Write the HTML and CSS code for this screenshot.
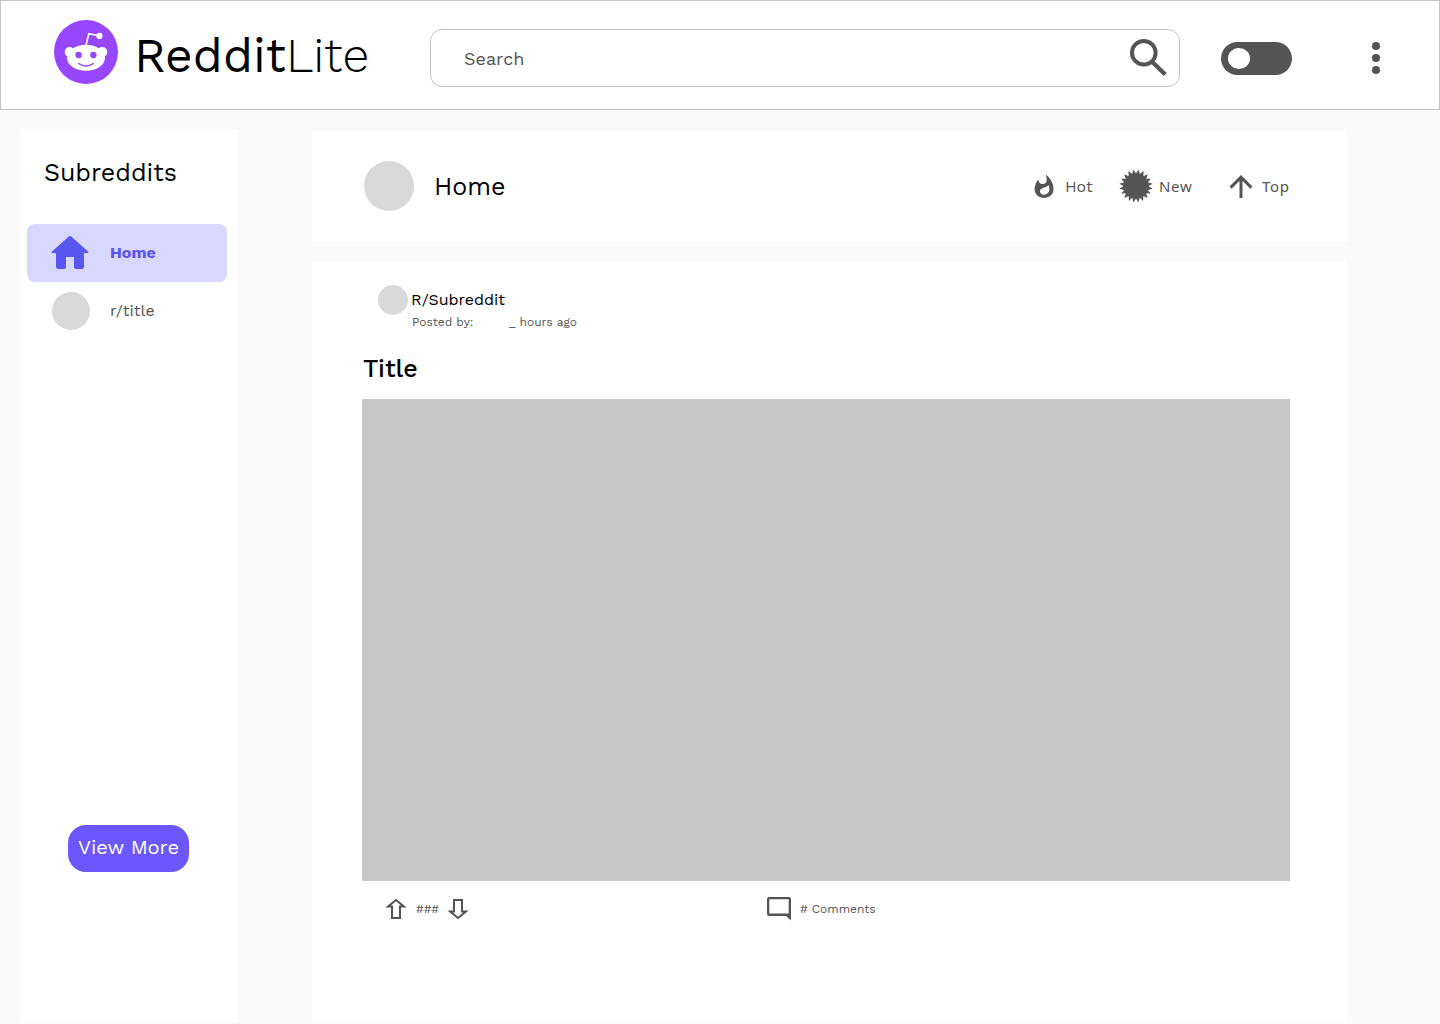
FILE: index.html
```html
<!DOCTYPE html>
<html lang="en">
<head>
<meta charset="utf-8">
<title>RedditLite</title>
<link rel="stylesheet" href="styles.css">
</head>
<body>
<header class="topbar">
  <svg class="logo" viewBox="0 0 64 64" aria-hidden="true">
    <circle cx="32" cy="32" r="32" fill="#9747ff"/>
    <circle cx="15.7" cy="32" r="5" fill="#fff"/>
    <circle cx="48.3" cy="32" r="5" fill="#fff"/>
    <ellipse cx="32" cy="37.8" rx="19" ry="13" fill="#fff"/>
    <path d="M31.8 26 34.8 13.7 45 15.8" fill="none" stroke="#fff" stroke-width="1.6"/>
    <circle cx="45.4" cy="15.9" r="3.1" fill="#fff"/>
    <circle cx="24.6" cy="35" r="3.2" fill="#9747ff"/>
    <circle cx="39.4" cy="35" r="3.2" fill="#9747ff"/>
    <path d="M24.8 43.7Q32 48.4 39.2 43.7" fill="none" stroke="#9747ff" stroke-width="1.6" stroke-linecap="round"/>
  </svg>
  <h1 class="brand"><span>Reddit</span><span class="brand-lite">Lite</span></h1>
  <div class="search">
    <span class="search-label">Search</span>
    <svg class="search-icon" viewBox="0 0 38 38" aria-hidden="true">
      <circle cx="13.8" cy="14.8" r="11.8" fill="none" stroke="#545454" stroke-width="4"/>
      <path d="M22.4 24 35.2 36.4" stroke="#545454" stroke-width="4.2"/>
    </svg>
  </div>
  <div class="toggle"><div class="knob"></div></div>
  <div class="dots"><i></i><i></i><i></i></div>
</header>
<div class="page">
  <aside class="sidebar">
    <h2 class="side-title">Subreddits</h2>
    <div class="side-item active">
      <svg class="home-icon" viewBox="0 0 38 36" aria-hidden="true">
        <path d="M17.8 1.4Q19 .4 20.2 1.4L37 16.4Q38 18 36.4 18H33V32Q33 34 31 34H25Q23 34 23 32V22H15V32Q15 34 13 34H7Q5 34 5 32V18H1.6Q0 18 1 16.4Z" fill="#5855f1"/>
      </svg>
      <span class="side-name bold">Home</span>
    </div>
    <div class="side-item">
      <div class="avatar a38"></div>
      <span class="side-name">r/title</span>
    </div>
    <button class="more"><span>View More</span></button>
  </aside>
  <main class="feed">
    <section class="feed-head">
      <div class="avatar a50"></div>
      <h2 class="feed-title">Home</h2>
      <div class="sort hot">
        <svg width="24" height="24" viewBox="0 0 24 24" aria-hidden="true"><path transform="translate(-2.1 -1) scale(1.18 1.09)" fill="#545454" d="M13.5.67s.74 2.65.74 4.8c0 2.06-1.35 3.73-3.41 3.73-2.07 0-3.63-1.67-3.63-3.73l.03-.36C5.21 7.51 4 10.62 4 14c0 4.42 3.58 8 8 8s8-3.58 8-8C20 8.61 17.41 3.8 13.5.67zM11.71 19c-1.78 0-3.22-1.4-3.22-3.14 0-1.62 1.05-2.76 2.81-3.12 1.77-.36 3.6-1.21 4.62-2.58.39 1.29.59 2.65.59 4.04 0 2.65-2.15 4.8-4.8 4.8z"/></svg>
        <span>Hot</span>
      </div>
      <div class="sort new">
        <svg width="34" height="34" viewBox="-17 -17 34 34" aria-hidden="true"><path fill="#545454" d="M0-12.5 2.6-16.6 3.8-11.9 7.6-14.9 7.3-10.1 11.9-11.6 10.1-7.3 14.9-7.3 11.8-3.7 16.6-2.3 12.5.1 16.6 2.8 11.8 3.9 14.8 7.6 10.1 7.3 11.6 11.9 7.3 10.1 7.2 14.9 3.8 11.8 2.4 16.6 0 12.5-2.4 16.6-3.8 11.8-7.2 14.9-7.3 10.1-11.6 11.9-10.1 7.3-14.8 7.6-11.8 3.9-16.6 2.8-12.5.1-16.6-2.3-11.8-3.7-14.9-7.3-10.1-7.3-11.9-11.6-7.3-10.1-7.6-14.9-3.8-11.9-2.6-16.6Z"/></svg>
        <span>New</span>
      </div>
      <div class="sort top">
        <svg width="24" height="24" viewBox="0 0 24 24" aria-hidden="true"><path d="M12 23V2.5M1.6 12.6 12 2.2 22.4 12.6" fill="none" stroke="#545454" stroke-width="3"/></svg>
        <span>Top</span>
      </div>
    </section>
    <article class="post">
      <div class="post-meta">
        <div class="avatar a30"></div>
        <div class="meta-text">
          <div class="sub-name">R/Subreddit</div>
          <div class="posted"><span class="by">Posted by:</span><span class="ago">_ hours ago</span></div>
        </div>
      </div>
      <h3 class="post-title">Title</h3>
      <div class="media"></div>
      <div class="actions">
        <svg width="22" height="22" viewBox="0 0 22 22" aria-hidden="true"><path d="M11 2.1 18.9 8.6H15V20H7V8.6H3.1Z" fill="none" stroke="#545454" stroke-width="2"/></svg>
        <span class="score">###</span>
        <svg width="22" height="22" viewBox="0 0 22 22" aria-hidden="true"><path d="M11 19.9 18.9 13.4H15V2H7V13.4H3.1Z" fill="none" stroke="#545454" stroke-width="2"/></svg>
        <svg class="comment-icon" width="24" height="24" viewBox="0 0 24 24" aria-hidden="true"><path fill="#545454" fill-rule="evenodd" d="M2 0H22Q24 0 24 2V23.5L19 19H2Q0 19 0 17V2Q0 0 2 0ZM2.3 2.3V16.5H21.7V2.3Z"/></svg>
        <span class="comments"># Comments</span>
      </div>
    </article>
  </main>
</div>
</body>
</html>
```
FILE: styles.css
```css
* { box-sizing: border-box; }
body {
  margin: 0;
  height: 1024px;
  overflow: hidden;
  background: #fafafa;
  color: #000;
  font-family: "Work Sans", Inter, sans-serif;
}
h1, h2, h3 { margin: 0; font-weight: 400; }
span, h1, h2, h3, .sub-name { white-space: nowrap; }
svg { display: block; flex: none; }

.topbar {
  display: flex;
  align-items: flex-start;
  height: 110px;
  padding: 19px 0 0 53px;
  background: #fff;
  border: 1px solid #c4c4c4;
}
.logo { width: 64px; height: 64px; }
.brand {
  display: flex;
  width: 296px;
  margin: 6px 0 0 16px;
  font-size: 48px;
  line-height: 60px;
}
.brand-lite { font-weight: 300; }
.search {
  display: flex;
  justify-content: space-between;
  width: 750px;
  height: 58px;
  margin-top: 9px;
  padding: 8px 11px 0 33px;
  border: 1px solid #c4c4c4;
  border-radius: 12px;
}
.search-label { font-size: 18px; line-height: 42px; color: #545454; }
.search-icon { width: 38px; height: 38px; }
.toggle {
  width: 71px;
  height: 33px;
  margin: 22px 0 0 41px;
  padding: 6px 7px;
  border-radius: 17px;
  background: #545454;
}
.knob { width: 22px; height: 21px; border-radius: 50%; background: #fff; }
.dots {
  display: flex;
  flex-direction: column;
  gap: 4px;
  margin: 22px 0 0 80px;
}
.dots i { width: 8px; height: 8px; border-radius: 50%; background: #545454; }

.page { display: flex; align-items: flex-start; padding-left: 20px; }
.sidebar {
  width: 217px;
  height: 894px;
  margin: 19px 75px 0 0;
  padding: 28px 7px 0;
  background: #fff;
}
.side-title { margin: 0 0 35px 17px; font-size: 25px; line-height: 32px; }
.side-item {
  display: flex;
  align-items: center;
  width: 200px;
  height: 58px;
  padding-left: 25px;
  border-radius: 8px;
  color: #545454;
}
.side-item.active { padding-left: 24px; background: #d8d7fd; color: #5855f1; }
.home-icon { width: 38px; height: 36px; margin-right: 1px; }
.side-name { margin: 0 0 2px 20px; font-size: 16px; }
.side-name.bold { font-weight: 700; }
.avatar { flex: none; border-radius: 50%; background: #d9d9d9; }
.a50 { width: 50px; height: 50px; margin-bottom: 1px; }
.a38 { width: 38px; height: 38px; }
.a30 { width: 30px; height: 30px; }
.more {
  display: block;
  width: 121px;
  height: 47px;
  margin: 485px 0 0 41px;
  padding: 0 0 2px;
  border: 0;
  border-radius: 18px;
  background: #6c57ff;
  color: #fff;
  font: 400 20px/45px "Work Sans", Inter, sans-serif;
}

.feed { width: 1035px; margin-top: 21px; }
.feed-head {
  display: flex;
  align-items: center;
  height: 111px;
  padding-left: 52px;
  background: #fff;
}
.feed-title { width: 598px; margin-left: 20px; padding-bottom: 1px; font-size: 25px; }
.sort { display: flex; align-items: center; font-size: 16px; color: #545454; }
.hot { width: 87px; gap: 9px; }
.new { width: 110px; gap: 6px; padding-bottom: 1px; }
.top { gap: 9px; }
.new span, .top span {
  margin-bottom: 1px;
  font-family: "Noto Sans", sans-serif;
  font-size: 15px;
  letter-spacing: .7px;
}
.post { height: 762px; margin-top: 19px; padding: 24px 0 0 50px; background: #fff; }
.post-meta { display: flex; padding-left: 16px; }
.meta-text { padding: 4px 0 0 3px; }
.sub-name { font-size: 16px; line-height: 22px; }
.posted { display: flex; padding-left: 1px; font-size: 12px; line-height: 22px; color: #545454; }
.by { width: 97px; }
.post-title { margin: 19px 0 13px 1px; font-size: 25px; line-height: 34px; font-weight: 500; }
.media { width: 928px; height: 482px; background: #c7c7c7; }
.actions { display: flex; align-items: center; height: 56px; padding-left: 23px; font-size: 12px; color: #545454; }
.score { width: 40px; padding-left: 9px; }
.comment-icon { margin-left: 298px; }
.comments { margin-left: 9px; }
```
